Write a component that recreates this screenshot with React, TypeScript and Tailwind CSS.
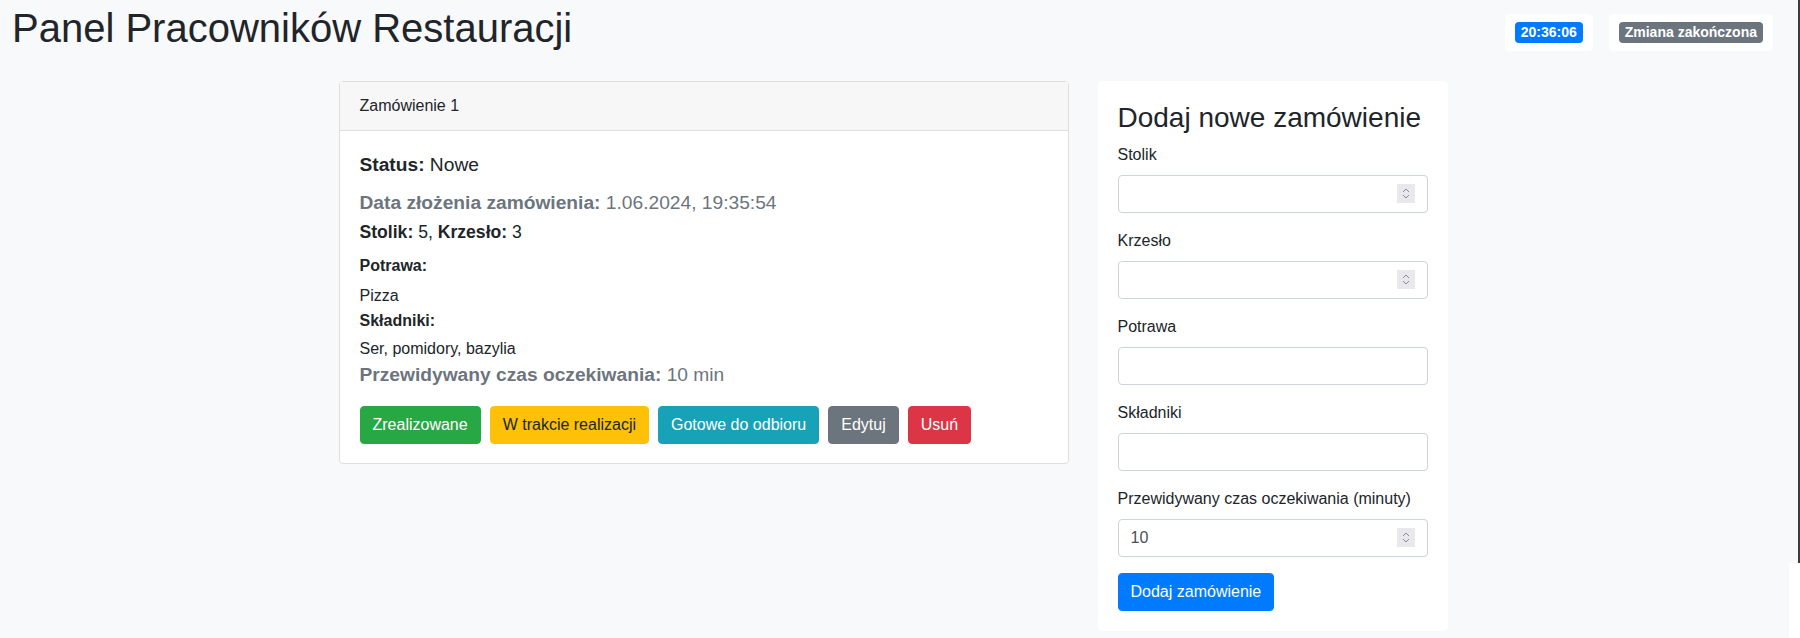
import React from 'react';

const font = { fontFamily: '"Liberation Sans", Arial, sans-serif' };

function Spinner() {
  return (
    <span className="pointer-events-none absolute right-[13px] top-[9px] block h-[19px] w-[18px]">
      <svg width="18" height="19" viewBox="0 0 18 19">
        <rect x="0" y="0" width="18" height="19" fill="#e9e9ed" />
        <polyline points="6,8 9,5 12,8" fill="none" stroke="#8b8b92" strokeWidth="1" />
        <polyline points="6,11 9,14 12,11" fill="none" stroke="#8b8b92" strokeWidth="1" />
      </svg>
    </span>
  );
}

function Field({ label, value, number }: { label: string; value?: string; number?: boolean }) {
  return (
    <div className="mb-4">
      <label className="mb-2 block text-[16px] leading-[24px] text-[#212529]">{label}</label>
      <div className="relative">
        <input
          type="text"
          defaultValue={value}
          className="block h-[38px] w-full rounded-[4px] border border-[#ced4da] bg-white px-3 text-[16px] text-[#495057] outline-none"
          style={font}
        />
        {number && <Spinner />}
      </div>
    </div>
  );
}

function OrderCard() {
  return (
    <div className="rounded-[4px] border border-[#dfdfdf] bg-white">
      <div className="border-b border-[#dfdfdf] bg-[#f7f7f7] px-5 py-3 text-[16px] leading-[24px] text-[#212529]">
        Zamówienie 1
      </div>
      <div className="px-5 pt-5 pb-[19px] text-[#212529]">
        <p className="text-[19.2px] leading-[28.8px]">
          <strong>Status:</strong> Nowe
        </p>
        <p className="mt-[9px] text-[19.2px] leading-[28.8px] text-[#6c757d]">
          <strong>Data złożenia zamówienia:</strong> 1.06.2024, 19:35:54
        </p>
        <p className="mt-[1px] text-[17.6px] leading-[26.4px]">
          <strong>Stolik:</strong> 5, <strong>Krzesło:</strong> 3
        </p>
        <h6 className="mt-[11px] text-[16px] font-bold leading-[19.2px]">Potrawa:</h6>
        <p className="mt-[9px] text-[16px] leading-[24px]">Pizza</p>
        <h6 className="mt-[3px] text-[16px] font-bold leading-[19.2px]">Składniki:</h6>
        <p className="mt-[7px] text-[16px] leading-[24px]">Ser, pomidory, bazylia</p>
        <p className="text-[19.2px] leading-[28.8px] text-[#6c757d]">
          <strong>Przewidywany czas oczekiwania:</strong> 10 min
        </p>
        <div className="mt-4 flex gap-[9px]">
          <button className="h-[38px] rounded-[4px] border border-[#28a745] bg-[#28a745] px-3 text-[16px] text-white">Zrealizowane</button>
          <button className="h-[38px] rounded-[4px] border border-[#ffc107] bg-[#ffc107] px-3 text-[16px] text-[#212529]">W trakcie realizacji</button>
          <button className="h-[38px] rounded-[4px] border border-[#17a2b8] bg-[#17a2b8] px-3 text-[16px] text-white">Gotowe do odbioru</button>
          <button className="h-[38px] rounded-[4px] border border-[#6c757d] bg-[#6c757d] px-3 text-[16px] text-white">Edytuj</button>
          <button className="h-[38px] rounded-[4px] border border-[#dc3545] bg-[#dc3545] px-3 text-[16px] text-white">Usuń</button>
        </div>
      </div>
    </div>
  );
}

function NewOrderForm() {
  return (
    <div className="rounded-[5px] bg-white p-5">
      <h3 className="mb-2 text-[28px] leading-[33.6px] text-[#212529]">Dodaj nowe zamówienie</h3>
      <Field label="Stolik" number />
      <Field label="Krzesło" number />
      <Field label="Potrawa" />
      <Field label="Składniki" />
      <Field label="Przewidywany czas oczekiwania (minuty)" value="10" number />
      <button className="h-[38px] rounded-[4px] border border-[#007bff] bg-[#007bff] px-3 text-[16px] text-white">Dodaj zamówienie</button>
    </div>
  );
}

export default function App() {
  return (
    <div className="flex h-[638px] w-full overflow-hidden" style={font}>
      <div className="flex-1 bg-[#f8f9fa]">
        <header className="flex items-start justify-between pl-3 pr-4 pt-1">
          <h1 className="text-[40px] leading-[48px] text-[#212529]">Panel Pracowników Restauracji</h1>
          <div className="mt-[10px] flex gap-4">
            <div className="rounded-[5px] bg-white px-[10px] py-[8px]">
              <span className="block rounded-[4px] bg-[#007bff] px-[6px] py-[3px] text-[14px] font-bold leading-[15px] text-white">
                20:36:06
              </span>
            </div>
            <div className="rounded-[5px] bg-white px-[10px] py-[8px]">
              <span className="block rounded-[4px] bg-[#6c757d] px-[6px] py-[3px] text-[14px] font-bold leading-[15px] text-white">
                Zmiana zakończona
              </span>
            </div>
          </div>
        </header>
        <main className="mx-auto mt-[29px] w-[1140px]">
          <div className="flex">
            <div className="w-2/3 pl-[14px] pr-[16px]">
              <OrderCard />
            </div>
            <div className="w-1/3 pl-[13px] pr-[17px]">
              <NewOrderForm />
            </div>
          </div>
        </main>
      </div>
      <div className="flex w-[11px] flex-col">
        <div className="h-[563px] border-r-2 border-[#3c3c3c] bg-[#f8f9fa]" />
        <div className="flex-1 bg-white" />
      </div>
    </div>
  );
}
